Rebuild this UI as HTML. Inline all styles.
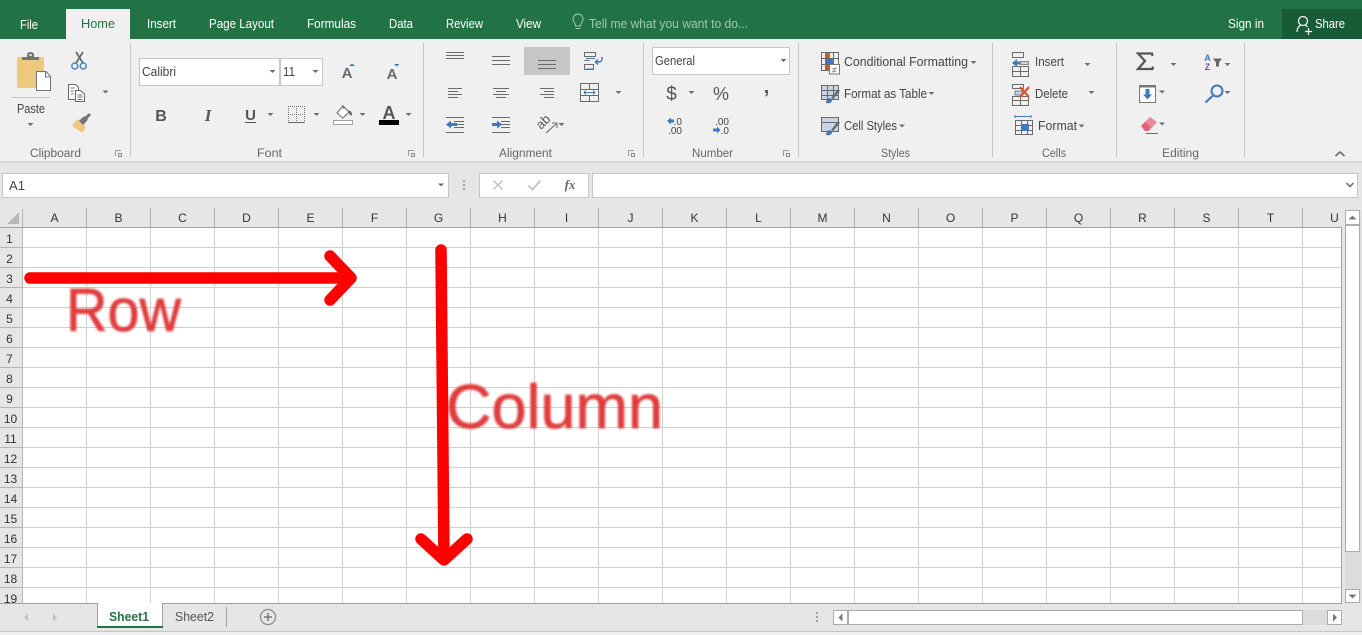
<!DOCTYPE html>
<html><head><meta charset="utf-8"><title>Excel</title>
<style>
html,body{margin:0;padding:0;width:1362px;height:635px;overflow:hidden;background:#f0f0f0}
svg{display:block;font-family:"Liberation Sans",sans-serif}
.t{fill:#fff;font-size:12.5px}
.r{fill:#444;font-size:12.5px}
.g{fill:#666;font-size:11.5px;text-anchor:middle}
.h{fill:#333;font-size:12px;text-anchor:middle}
.c{shape-rendering:crispEdges}
.l{stroke:#6a6a6a;stroke-width:1;fill:none;shape-rendering:crispEdges}
.b{stroke:#4a7eb8;fill:none}
</style></head><body>
<svg width="1362" height="635" viewBox="0 0 1362 635" xmlns="http://www.w3.org/2000/svg">
<defs>
<path id="a" d="M-3-1.500h6l-3 3z" fill="#6d6d6d"/>
<g id="la"><path d="M0 0h6v1h-5v5h-1z" fill="#9a9a9a"/><path d="M3 3h4v4h-4z" fill="#8a8a8a"/><path d="M4 4h2v2h-2z" fill="#f0f0f0"/></g>
<pattern id="grid" x="86" y="247" width="64" height="20" patternUnits="userSpaceOnUse"><rect x="0" y="0" width="1" height="20" fill="#d0d0d0"/><rect x="0" y="0" width="64" height="1" fill="#d0d0d0"/></pattern>
<pattern id="cg" x="86" y="208" width="64" height="19" patternUnits="userSpaceOnUse"><rect width="1" height="19" fill="#b4b4b4"/></pattern>
<pattern id="rg" x="0" y="247" width="22" height="20" patternUnits="userSpaceOnUse"><rect width="22" height="1" fill="#b4b4b4"/></pattern>
<filter id="bl" x="-10%" y="-10%" width="120%" height="120%"><feGaussianBlur stdDeviation="1"/></filter>
</defs>

<!-- title/tab strip -->
<rect width="1362" height="39" fill="#217346"/>
<rect x="66" y="9" width="64" height="31" fill="#f0f0f0"/>
<rect x="1282" y="9" width="80" height="30" fill="#185c37"/>
<text class="t" x="20" y="29" textLength="18" lengthAdjust="spacingAndGlyphs">File</text>
<text x="81" y="28" font-size="12.5" fill="#217346" textLength="34" lengthAdjust="spacingAndGlyphs">Home</text>
<text class="t" x="147" y="28" textLength="29" lengthAdjust="spacingAndGlyphs">Insert</text>
<text class="t" x="209" y="28" textLength="65" lengthAdjust="spacingAndGlyphs">Page Layout</text>
<text class="t" x="307" y="28" textLength="49" lengthAdjust="spacingAndGlyphs">Formulas</text>
<text class="t" x="389" y="28" textLength="24" lengthAdjust="spacingAndGlyphs">Data</text>
<text class="t" x="446" y="28" textLength="37" lengthAdjust="spacingAndGlyphs">Review</text>
<text class="t" x="516" y="28" textLength="25" lengthAdjust="spacingAndGlyphs">View</text>
<g fill="none" stroke="#a4c8b2" stroke-width="1"><path d="M575.500 26c0-3-2.500-4-2.500-7a5 5 0 0 1 10 0c0 3-2.500 4-2.500 7z"/><path d="M575.500 28.500h5"/></g>
<text x="589" y="28" font-size="12.5" fill="#a4c8b2" textLength="159" lengthAdjust="spacingAndGlyphs">Tell me what you want to do...</text>
<text class="t" x="1228" y="28" textLength="36" lengthAdjust="spacingAndGlyphs">Sign in</text>
<g fill="none" stroke="#fff" stroke-width="1.200"><circle cx="1303" cy="21" r="4.500"/><path d="M1297 32c0-4 2-6 4-7M1305 25c1 .5 2 1 2.500 2M1305 31.500h7M1308.500 28v7"/></g>
<text class="t" x="1315" y="28" textLength="30" lengthAdjust="spacingAndGlyphs">Share</text>

<!-- ribbon -->
<rect y="39" width="1362" height="122" fill="#f0f0f0"/>
<rect y="161" width="1362" height="2" fill="#d4d4d4" class="c"/>
<g fill="#c6c6c6" class="c"><rect x="130" y="43" width="1" height="114"/><rect x="423" y="43" width="1" height="114"/><rect x="643" y="43" width="1" height="114"/><rect x="798" y="43" width="1" height="114"/><rect x="992" y="43" width="1" height="114"/><rect x="1116" y="43" width="1" height="114"/><rect x="1244" y="43" width="1" height="114"/></g>
<text class="g" x="55.500" y="157" textLength="51" lengthAdjust="spacingAndGlyphs">Clipboard</text>
<text class="g" x="269.500" y="157" textLength="25" lengthAdjust="spacingAndGlyphs">Font</text>
<text class="g" x="525.500" y="157" textLength="53" lengthAdjust="spacingAndGlyphs">Alignment</text>
<text class="g" x="712.500" y="157" textLength="41" lengthAdjust="spacingAndGlyphs">Number</text>
<text class="g" x="895.500" y="157" textLength="29" lengthAdjust="spacingAndGlyphs">Styles</text>
<text class="g" x="1054" y="157" textLength="24" lengthAdjust="spacingAndGlyphs">Cells</text>
<text class="g" x="1180.500" y="157" textLength="37" lengthAdjust="spacingAndGlyphs">Editing</text>
<use href="#la" x="115" y="150"/><use href="#la" x="408" y="150"/><use href="#la" x="628" y="150"/><use href="#la" x="783" y="150"/>
<path d="M1335.500 156l4.500-4 4.500 4" fill="none" stroke="#6d6d6d" stroke-width="1.600"/>

<!-- clipboard -->
<rect x="17" y="57" width="27" height="31" rx="1.500" fill="#edc87e"/>
<path d="M22 60v-3h5v-2.500a3.500 2.500 0 0 1 7 0v2.500h5v3z" fill="#757575"/><rect x="29" y="54" width="3" height="2" fill="#edc87e"/>
<path d="M36.500 71.500h9.500l4.500 5v14h-14z" fill="#fff" stroke="#757575"/><path d="M45.500 72v5h5" fill="none" stroke="#757575"/>
<rect x="12" y="97" width="38" height="1" fill="#c6c6c6" class="c"/>
<text x="17" y="113" font-size="12.5" fill="#444" textLength="28" lengthAdjust="spacingAndGlyphs">Paste</text>
<use href="#a" x="30.500" y="124.500"/>
<g fill="none"><path d="M76 52l7 11M83 52l-7 11" stroke="#6a6a6a" stroke-width="1.800"/><circle cx="74.800" cy="66" r="3" stroke="#4a86c5" stroke-width="1.500"/><circle cx="83.200" cy="66" r="3" stroke="#4a86c5" stroke-width="1.500"/></g>
<path d="M68.500 84.500h7l3 3v12h-10z" fill="#fff" stroke="#6a6a6a"/><path d="M75.500 90.500h5l4 3.500v7.500h-9z" fill="#fff" stroke="#6a6a6a"/><path d="M77.500 95h5M77.500 97h5M77.500 99.500h5" stroke="#3f79b8" class="c"/><path d="M70.500 88h4M70.500 91h3M70.500 94h3" stroke="#777" class="c"/>
<use href="#a" x="105.500" y="92"/>
<path d="M72 125l6-6 8 8-3 5c-4 0-8-4-11-7z" fill="#edc87e"/><path d="M79 121l4-4 3-1 3-3 2 2-3 3-1 3-4 4z" fill="#757575"/>

<!-- font -->
<rect x="139.500" y="58.500" width="140" height="27" fill="#fff" stroke="#c6c6c6" class="c"/>
<rect x="280.500" y="58.500" width="42" height="27" fill="#fff" stroke="#c6c6c6" class="c"/>
<text x="142" y="76" font-size="12.5" fill="#444" textLength="34" lengthAdjust="spacingAndGlyphs">Calibri</text>
<text x="283" y="76" font-size="12.5" fill="#444" textLength="12" lengthAdjust="spacingAndGlyphs">11</text>
<use href="#a" x="272.500" y="71.500"/><use href="#a" x="315.500" y="71.500"/>
<text x="347" y="78" font-size="15" font-weight="bold" fill="#6a6a6a" text-anchor="middle">A</text>
<path d="M349 66l3-2.500 3 2.500z" fill="#3f79b8"/>
<text x="392" y="79" font-size="15" font-weight="bold" fill="#6a6a6a" text-anchor="middle">A</text>
<path d="M394 64h5.500l-2.800 2.500z" fill="#3f79b8"/>
<text x="161" y="121" font-size="16" font-weight="bold" fill="#555" text-anchor="middle">B</text>
<text x="208" y="121" font-size="17" font-weight="bold" font-style="italic" font-family="Liberation Serif,serif" fill="#555" text-anchor="middle">I</text>
<text x="250.500" y="120" font-size="15" font-weight="bold" fill="#555" text-anchor="middle">U</text>
<rect x="245" y="122" width="11" height="1" fill="#555" class="c"/>
<use href="#a" x="270.500" y="114.500"/>
<g stroke="#777" stroke-dasharray="1 1" fill="none" class="c"><path d="M288 106.500h17M288 114.500h17"/><path d="M288.500 106v16M296.500 106v16M304.500 106v16"/></g>
<rect x="288" y="122" width="17" height="1" fill="#666" class="c"/>
<use href="#a" x="316.500" y="114.500"/>
<path d="M337 113l6-7 6 6-6 6z" fill="#fff" stroke="#666"/><path d="M342 105.500l2 3M349 111c2 .5 2.500 2 2.500 4-1 0-2.500-1-2.500-4z" stroke="#666" fill="#3f79b8"/>
<rect x="333.500" y="120.500" width="19" height="4" fill="#fff" stroke="#a0a0a0" class="c"/>
<use href="#a" x="362.500" y="114.500"/>
<text x="389" y="119" font-size="18" font-weight="bold" fill="#555" text-anchor="middle">A</text>
<rect x="379" y="120" width="20" height="5" fill="#000" class="c"/>
<use href="#a" x="408.500" y="114.500"/>

<!-- alignment -->
<rect x="524" y="47" width="46" height="28" fill="#c6c6c6" class="c"/>
<g class="l">
<path d="M446 52.500h18M446 55.500h18M446 58.500h18"/>
<path d="M492 56.500h18M492 60.500h18M492 64.500h18"/>
<path d="M538 60.500h18M538 64.500h18M538 68.500h18"/>
<path d="M448 88.500h14M448 91.500h10M448 94.500h14M448 97.500h10"/>
<path d="M493 88.500h16M496 91.500h10M493 94.500h16M496 97.500h10"/>
<path d="M540 88.500h14M544 91.500h10M540 94.500h14M544 97.500h10"/>
<path d="M446 117.500h18M454 121.500h10M454 124.500h10M454 127.500h10M446 132.500h18"/>
<path d="M492 117.500h18M501 121.500h9M501 124.500h9M501 127.500h9M492 132.500h18"/>
<path d="M584.500 60.500h5M584.500 64.500h9v5h-9z"/>
<path d="M580.500 83.500h18v18h-18zM580.500 89.500h18M580.500 95.500h18M589.500 83.500v6M589.500 95.500v6"/>
</g>
<rect x="581" y="90" width="17" height="5" fill="#fff"/>
<path d="M584 92.500h11M586 90.500l-2 2 2 2M593 90.500l2 2-2 2" fill="none" stroke="#3f79b8"/>
<path d="M584.500 52.500h11v4h-11z" fill="none" stroke="#6a6a6a"/>
<path d="M586 58.500h9M586 69h7" fill="none" stroke="#3f79b8"/>
<path d="M602 57v2c0 2-1.500 3-3 3h-3M598 59.500l-2.500 2.500 2.500 2.500" fill="none" stroke="#3f79b8" stroke-width="1.500"/>
<use href="#a" x="618.500" y="92.500"/>
<path d="M446 124.500l5-4v2.500h6v3h-6v2.500z" fill="#3f79b8"/>
<path d="M502 124.500l-5-4v2.500h-5v3h5v2.500z" fill="#3f79b8"/>
<text x="0" y="0" font-size="13" fill="#555" transform="translate(541 130) rotate(-45)">ab</text>
<path d="M546 133l10-9M552 123h5v5" fill="none" stroke="#666"/>
<use href="#a" x="561.500" y="124.500"/>

<!-- number -->
<rect x="652.500" y="47.500" width="137" height="27" fill="#fff" stroke="#c6c6c6" class="c"/>
<text x="655" y="65" font-size="12.5" fill="#444" textLength="40" lengthAdjust="spacingAndGlyphs">General</text>
<use href="#a" x="783.500" y="60.500"/>
<text x="671.500" y="100" font-size="19" fill="#555" text-anchor="middle">$</text>
<use href="#a" x="691.500" y="92.500"/>
<text x="721" y="100" font-size="18" fill="#555" text-anchor="middle">%</text>
<text x="766.500" y="93" font-size="20" font-weight="bold" fill="#555" text-anchor="middle">,</text>
<text x="682" y="125" font-size="10" fill="#444" text-anchor="end">.0</text>
<text x="682" y="134" font-size="10" fill="#444" text-anchor="end">.00</text>
<path d="M667 121l4-3.500v2h3v3h-3v2z" fill="#3f79b8"/>
<text x="729" y="125" font-size="10" fill="#444" text-anchor="end">.00</text>
<text x="729" y="134" font-size="10" fill="#444" text-anchor="end">.0</text>
<path d="M713 128.500h4v-2l3.500 3.500-3.500 3.500v-2h-4z" fill="#3f79b8"/>

<!-- styles -->
<path class="l" d="M821.500 52.500h17v18h-17zM821.500 58.500h17M821.500 64.500h17M827.500 52.500v18M833.500 52.500v18"/>
<rect x="825" y="53" width="5" height="5" fill="#d9542b"/><rect x="825" y="59" width="8" height="5" fill="#3f79b8"/><rect x="825" y="65" width="4" height="5" fill="#d9542b"/>
<rect x="829.500" y="64.500" width="10" height="9.500" fill="#fff" stroke="#777" class="c"/>
<text x="834.500" y="73" font-size="9" fill="#555" text-anchor="middle">≠</text>
<text class="r" x="844" y="66" textLength="124" lengthAdjust="spacingAndGlyphs">Conditional Formatting</text>
<use href="#a" x="973.500" y="62.500"/>

<rect x="822" y="86" width="17" height="13" fill="#c7d4e6"/>
<path class="l" d="M821.500 85.500h17v14h-17zM821.500 90.500h17M821.500 95.500h17M827.500 85.500v14M833.500 85.500v14"/>
<path d="M826 103c0-3 2-5 4-5l2 2c0 2-2 4-6 3z" fill="#3f79b8"/><path d="M831 98l7-9 2 2-7 8z" fill="#6a6a6a"/>
<text class="r" x="844" y="98" textLength="83" lengthAdjust="spacingAndGlyphs">Format as Table</text>
<use href="#a" x="931.500" y="93.500"/>

<rect x="822" y="118" width="17" height="13" fill="#c7d4e6"/>
<path class="l" d="M821.500 117.500h17v14h-17zM821.500 122.500h17"/>
<path d="M826 135c0-3 2-5 4-5l2 2c0 2-2 4-6 3z" fill="#3f79b8"/><path d="M831 130l7-9 2 2-7 8z" fill="#6a6a6a"/>
<text class="r" x="844" y="130" textLength="53" lengthAdjust="spacingAndGlyphs">Cell Styles</text>
<use href="#a" x="902" y="126"/>

<!-- cells -->
<path class="l" d="M1012.500 52.500h11v5h-11zM1012.500 66.500h16v5h-16v-5zM1012.500 66.500v10h16v-10M1020.500 66.500v10"/>
<path d="M1020.500 61.500h8v3h-8z" fill="#c7d4e6" stroke="#6a6a6a" stroke-width=".8"/>
<path d="M1012 63l5-4v2.500h3v3h-3v2.500z" fill="#3f79b8"/>
<text class="r" x="1035" y="66" textLength="29" lengthAdjust="spacingAndGlyphs">Insert</text>
<use href="#a" x="1087.500" y="64.500"/>
<path class="l" d="M1012.500 84.500h11v4h-11zM1012.500 96.500h16v9h-16zM1020.500 96.500v9M1012.500 100.500h16"/>
<rect x="1015" y="91" width="7" height="4" fill="#c7d4e6" stroke="#6a6a6a" stroke-width=".8"/>
<path d="M1020 87l9 10M1029 87l-9 10" stroke="#d9542b" stroke-width="2.200"/>
<text class="r" x="1035" y="98" textLength="33" lengthAdjust="spacingAndGlyphs">Delete</text>
<use href="#a" x="1091.500" y="92.500"/>
<path d="M1015 116.500h16M1015 115v3M1031 115v3" stroke="#3f79b8" fill="none"/>
<path class="l" d="M1015.500 120.500h17v14h-17zM1021.500 120.500v14M1027.500 120.500v14M1015.500 125.500h17M1015.500 130.500h17"/>
<rect x="1021" y="124" width="8" height="7" fill="#3f79b8"/>
<text class="r" x="1038" y="130" textLength="39" lengthAdjust="spacingAndGlyphs">Format</text>
<use href="#a" x="1081.500" y="126"/>

<!-- editing -->
<path d="M1152.500 56l-.5-2.500h-14l7 7.500-7 8h14.500l.5-2.500" fill="none" stroke="#555" stroke-width="2.200"/>
<use href="#a" x="1173.500" y="64.500"/>
<text x="1207.500" y="61" font-size="9" font-weight="bold" fill="#3f79b8" text-anchor="middle">A</text>
<text x="1207.500" y="70" font-size="9" font-weight="bold" fill="#7d4fa8" text-anchor="middle">Z</text>
<path d="M1213 58.500h9l-3 4v4h-3v-4z" fill="#666"/>
<use href="#a" x="1227.500" y="64.500"/>
<rect x="1139.500" y="85.500" width="16" height="17" fill="#fff" stroke="#777" class="c"/><rect x="1139" y="85" width="17" height="2.500" fill="#777" class="c"/>
<path d="M1145.500 89h4v5.500h2.500l-4.500 5-4.500-5h2.500z" fill="#3f79b8"/>
<use href="#a" x="1162" y="92"/>
<circle cx="1217" cy="91" r="5.500" fill="none" stroke="#3f79b8" stroke-width="2"/>
<path d="M1212.500 96l-7 6.500" stroke="#3f79b8" stroke-width="2.200"/>
<use href="#a" x="1227.500" y="92.500"/>
<path d="M1141 126l9-9 7 5-8 9h-4z" fill="#ea8a9a"/><path d="M1141 126l4-4 6 5-3 4h-3z" fill="#e26478"/>
<rect x="1146" y="133" width="12" height="1" fill="#666" class="c"/>
<use href="#a" x="1162" y="124"/>

<!-- formula bar -->
<rect y="163" width="1362" height="45" fill="#e6e6e6"/>
<rect x="2.500" y="173.500" width="446" height="24" fill="#fff" stroke="#c6c6c6" class="c"/>
<text x="9" y="190" font-size="12.5" fill="#444" textLength="16" lengthAdjust="spacingAndGlyphs">A1</text>
<use href="#a" x="441" y="185"/>
<g fill="#a0a0a0"><rect x="463" y="180" width="2" height="2"/><rect x="463" y="184" width="2" height="2"/><rect x="463" y="188" width="2" height="2"/></g>
<rect x="479.500" y="173.500" width="109" height="24" fill="#fff" stroke="#c6c6c6" class="c"/>
<path d="M493.500 180.500l9 9M502.500 180.500l-9 9" stroke="#c0c0c0" stroke-width="1.500" fill="none"/>
<path d="M528.500 185.500l4 4 8-9" stroke="#c6c6c6" stroke-width="2" fill="none"/>
<text x="570" y="189" font-family="Liberation Serif,serif" font-style="italic" font-weight="bold" font-size="13" fill="#666" text-anchor="middle">fx</text>
<rect x="592.500" y="173.500" width="765" height="24" fill="#fff" stroke="#c6c6c6" class="c"/>
<path d="M1346.500 183l3.500 3.500 3.500-3.500" fill="none" stroke="#777" stroke-width="1.600"/>

<!-- sheet -->
<rect y="208" width="1362" height="395" fill="#e6e6e6"/>
<rect x="22" y="227" width="1320" height="376" fill="#fff" class="c"/>
<rect x="23" y="228" width="1318" height="375" fill="url(#grid)" class="c"/>
<rect x="86" y="208" width="1256" height="19" fill="url(#cg)" class="c"/>
<rect x="0" y="247" width="22" height="356" fill="url(#rg)" class="c"/>
<rect x="22" y="209" width="1" height="394" fill="#b4b4b4" class="c"/>
<rect x="0" y="227" width="1342" height="1" fill="#a0a0a0" class="c"/>
<rect x="1341" y="227" width="1" height="376" fill="#a0a0a0" class="c"/>
<path d="M19 212v12h-12z" fill="#b9b9b9"/>
<g class="h">
<text x="54.500" y="222">A</text><text x="118.500" y="222">B</text><text x="182.500" y="222">C</text><text x="246.500" y="222">D</text><text x="310.500" y="222">E</text><text x="374.500" y="222">F</text><text x="438.500" y="222">G</text><text x="502.500" y="222">H</text><text x="566.500" y="222">I</text><text x="630.500" y="222">J</text><text x="694.500" y="222">K</text><text x="758.500" y="222">L</text><text x="822.500" y="222">M</text><text x="886.500" y="222">N</text><text x="950.500" y="222">O</text><text x="1014.500" y="222">P</text><text x="1078.500" y="222">Q</text><text x="1142.500" y="222">R</text><text x="1206.500" y="222">S</text><text x="1270.500" y="222">T</text><text x="1334.500" y="222">U</text>
</g>
<g class="h">
<text x="9.500" y="243">1</text><text x="9.500" y="263">2</text><text x="9.500" y="283">3</text><text x="9.500" y="303">4</text><text x="9.500" y="323">5</text><text x="9.500" y="343">6</text><text x="9.500" y="363">7</text><text x="9.500" y="383">8</text><text x="9.500" y="403">9</text><text x="10.500" y="423">10</text><text x="10.500" y="443">11</text><text x="10.500" y="463">12</text><text x="10.500" y="483">13</text><text x="10.500" y="503">14</text><text x="10.500" y="523">15</text><text x="10.500" y="543">16</text><text x="10.500" y="563">17</text><text x="10.500" y="583">18</text><text x="10.500" y="603">19</text>
</g>

<!-- annotations -->
<g fill="none" stroke="#ff0000" stroke-width="11.500" stroke-linecap="round" stroke-linejoin="round">
<path d="M30 278H349"/><path d="M330 256l21 22-21 22"/>
<path d="M441 250L444 559"/><path d="M421 539l23 21 23-21"/>
</g>
<g filter="url(#bl)" fill="#e03c3c" stroke="#e03c3c" stroke-width=".8">
<text x="66" y="331" font-size="60" textLength="115" lengthAdjust="spacingAndGlyphs">Row</text>
<text x="446" y="428" font-size="62" textLength="217" lengthAdjust="spacingAndGlyphs">Column</text>
</g>

<!-- vertical scrollbar -->
<rect x="1342" y="208" width="20" height="395" fill="#e6e6e6"/>
<rect x="1345" y="210" width="16" height="393" fill="#dcdcdc"/>
<rect x="1345.500" y="210.500" width="14" height="14" fill="#fff" stroke="#ababab" class="c"/>
<path d="M1348.500 219.500l4-4 4 4z" fill="#777"/>
<rect x="1345.500" y="225.500" width="14" height="326" fill="#fff" stroke="#ababab" class="c"/>
<rect x="1345.500" y="589.500" width="14" height="13" fill="#fff" stroke="#ababab" class="c"/>
<path d="M1348.500 594.500h8l-4 4z" fill="#777"/>

<!-- bottom bar -->
<rect y="603" width="1362" height="29" fill="#e6e6e6"/>
<rect y="603" width="1342" height="1" fill="#a0a0a0" class="c"/>
<rect y="631" width="1362" height="1" fill="#c6c6c6" class="c"/>
<rect y="632" width="1362" height="3" fill="#f0f0f0"/>
<path d="M28 613.500l-4 4 4 4z" fill="#c0c0c0"/><path d="M53 613.500l4 4-4 4z" fill="#c0c0c0"/>
<rect x="97.500" y="603" width="65" height="24" fill="#fff" class="c"/>
<rect x="97" y="603" width="1" height="25" fill="#a0a0a0" class="c"/>
<rect x="162" y="603" width="1" height="25" fill="#a0a0a0" class="c"/>
<rect x="97" y="626" width="66" height="2" fill="#217346" class="c"/>
<text x="129" y="621" font-size="12.5" font-weight="bold" fill="#217346" text-anchor="middle" textLength="40" lengthAdjust="spacingAndGlyphs">Sheet1</text>
<text x="194.500" y="621" font-size="12.5" fill="#555" text-anchor="middle" textLength="39" lengthAdjust="spacingAndGlyphs">Sheet2</text>
<rect x="226" y="607" width="1" height="20" fill="#a0a0a0" class="c"/>
<circle cx="268" cy="617" r="7.500" fill="none" stroke="#8a8a8a" stroke-width="1.200"/>
<path d="M264 617h8M268 613v8" stroke="#777" stroke-width="1.500"/>
<g fill="#a0a0a0"><rect x="816" y="612" width="2" height="2"/><rect x="816" y="616" width="2" height="2"/><rect x="816" y="620" width="2" height="2"/></g>
<rect x="833" y="610" width="509" height="15" fill="#dcdcdc"/>
<rect x="833.500" y="610.500" width="14" height="14" fill="#fff" stroke="#ababab" class="c"/>
<path d="M842.500 613.500l-4 4 4 4z" fill="#777"/>
<rect x="848.500" y="610.500" width="454" height="14" fill="#fff" stroke="#ababab" class="c"/>
<rect x="1327.500" y="610.500" width="14" height="14" fill="#fff" stroke="#ababab" class="c"/>
<path d="M1333 613.500l4 4-4 4z" fill="#777"/>
</svg>
</body></html>
